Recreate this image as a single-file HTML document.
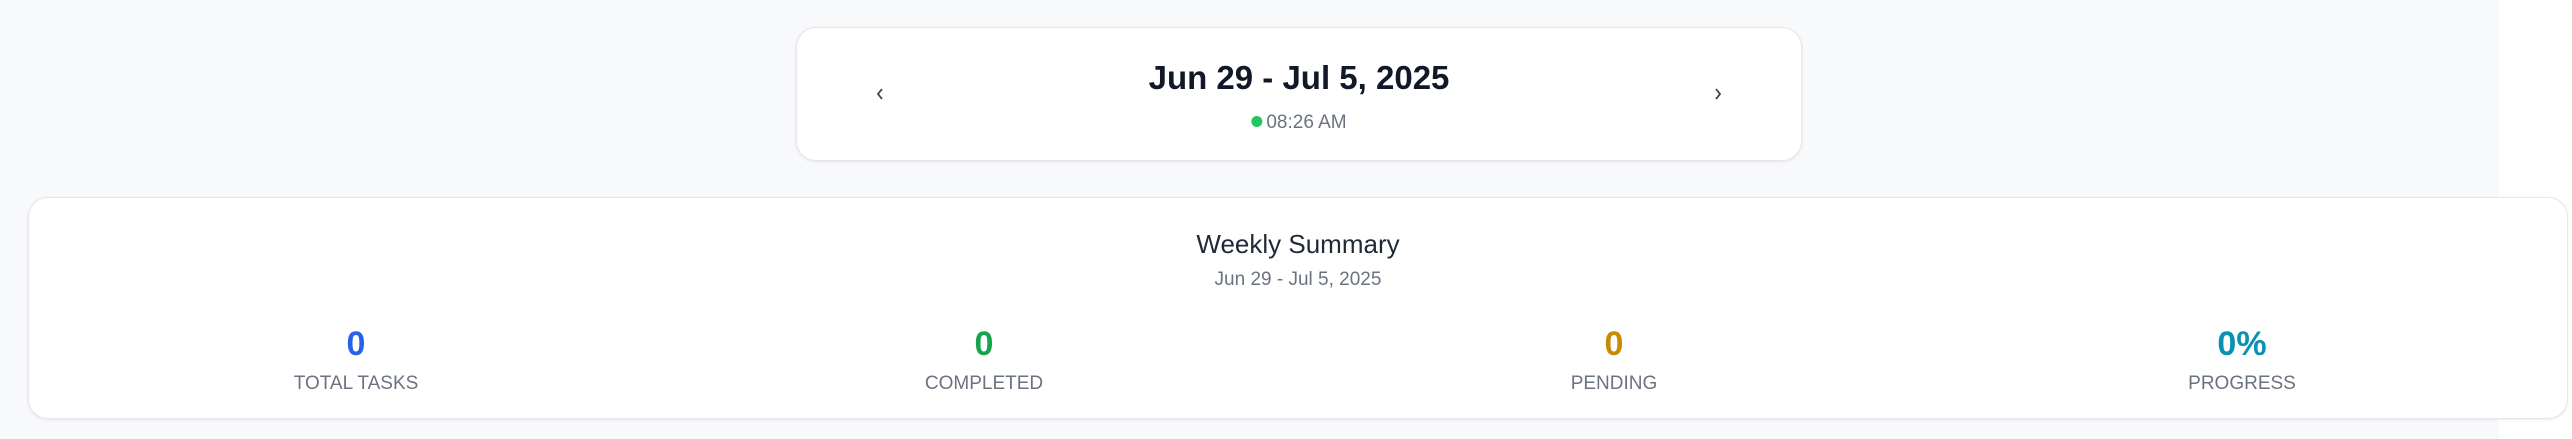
<!DOCTYPE html>
<html><head><style>
html,body{margin:0;padding:0;}
body{width:2572px;height:439px;background:#fff;position:relative;overflow:hidden;font-family:"Liberation Sans",sans-serif;}
.bg{position:absolute;left:0;top:0;width:2499px;height:439px;background:#f8f9fa;}
.card{position:absolute;background:#fff;border:1px solid #e5e7eb;border-radius:20px;box-shadow:0 1px 3px rgba(0,0,0,0.08);box-sizing:border-box;}
.c{position:absolute;text-align:center;transform:translateX(-50%);white-space:nowrap;}
.num{font-size:34px;font-weight:bold;top:325px;}
.lab{font-size:19px;color:#6b7280;top:373px;}
</style></head><body>
<div class="bg"></div>
<div class="card" style="left:796px;top:27px;width:1006px;height:134px;"></div>
<svg style="position:absolute;left:874px;top:86px" width="12" height="16" viewBox="0 0 12 16"><path d="M8 3 L4 8 L8 13" fill="none" stroke="#374151" stroke-width="1.8"/></svg>
<svg style="position:absolute;left:1712px;top:86px" width="12" height="16" viewBox="0 0 12 16"><path d="M4 3 L8 8 L4 13" fill="none" stroke="#374151" stroke-width="1.8"/></svg>
<div class="c" style="left:1299px;top:59px;font-size:33px;font-weight:bold;color:#111827;">Jun 29 - Jul 5, 2025</div>
<div class="c" style="left:1299px;top:112px;font-size:19px;color:#6b7280;"><span style="display:inline-block;width:11px;height:11px;border-radius:50%;background:#22c55e;margin-right:4px;vertical-align:1px"></span>08:26 AM</div>
<div class="card" style="left:28px;top:197px;width:2540px;height:222px;"></div>
<div class="c" style="left:1298px;top:229px;font-size:26px;color:#1f2937;">Weekly Summary</div>
<div class="c" style="left:1298px;top:269px;font-size:19px;color:#6b7280;">Jun 29 - Jul 5, 2025</div>
<div class="c num" style="left:356px;color:#2563eb;">0</div>
<div class="c lab" style="left:356px;">TOTAL TASKS</div>
<div class="c num" style="left:984px;color:#16a34a;">0</div>
<div class="c lab" style="left:984px;">COMPLETED</div>
<div class="c num" style="left:1614px;color:#ca8a04;">0</div>
<div class="c lab" style="left:1614px;">PENDING</div>
<div class="c num" style="left:2242px;color:#0891b2;">0%</div>
<div class="c lab" style="left:2242px;">PROGRESS</div>
</body></html>
